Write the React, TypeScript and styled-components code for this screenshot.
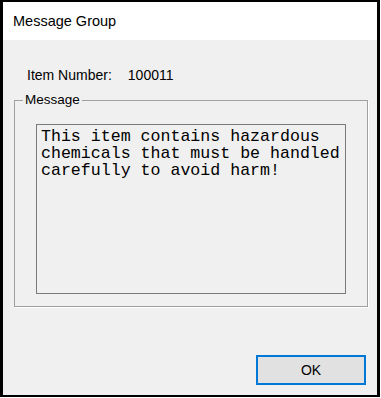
import styled, { createGlobalStyle } from 'styled-components';

const GlobalStyle = createGlobalStyle`
  html, body {
    margin: 0;
    padding: 0;
    background: #ffffff;
  }
  body {
    font-family: "Liberation Sans", Arial, sans-serif;
  }
`

const Window = styled.div`
  box-sizing: border-box;
  width: 380px;
  height: 397px;
  border-style: solid;
  border-color: #000000;
  border-width: 2px 3px 2px 3px;
  display: flex;
  flex-direction: column;
  background: #f0f0f0;
`

const TitleBar = styled.div`
  height: 38px;
  flex: none;
  background: #ffffff;
  display: flex;
  align-items: center;
  padding-left: 10px;
  font-size: 14.5px;
  color: #000000;
`

const Body = styled.div`
  flex: 1;
  display: flex;
  flex-direction: column;
  padding: 0 9px 10px 11px;
`

const ItemRow = styled.div`
  display: flex;
  gap: 16px;
  margin-top: 27px;
  padding-left: 13px;
  font-size: 14px;
  line-height: 16px;
  color: #000000;
`

const GroupBox = styled.fieldset`
  margin: 9px 0 0 0;
  padding: 16px 21px 12px 21px;
  border: 1px solid #a0a0a0;
  box-shadow: 1px 1px 0 #ffffff;
  min-width: 0;
`

const Legend = styled.legend`
  margin-left: -13px;
  padding: 0 2px;
  font-size: 13.5px;
  line-height: 16px;
  color: #000000;
`

const MessageBox = styled.div`
  box-sizing: border-box;
  height: 170px;
  border: 1px solid #7a7a7a;
  padding: 3px 1px 3px 4px;
  font-family: "Courier New", "Liberation Mono", monospace;
  font-size: 16.6px;
  line-height: 17px;
  color: #000000;
  background: #f0f0f0;
`

const Footer = styled.div`
  margin-top: auto;
  display: flex;
  justify-content: flex-end;
  padding-right: 2px;
`

const Button = styled.button`
  box-sizing: border-box;
  width: 110px;
  height: 30px;
  border: 2px solid #0078d7;
  background: #e1e1e1;
  font-family: "Liberation Sans", Arial, sans-serif;
  font-size: 14px;
  color: #000000;
  padding: 0;
`

export default function App() {
  return (
    <>
      <GlobalStyle />
      <Window>
        <TitleBar>Message Group</TitleBar>
        <Body>
          <ItemRow>
            <span>Item Number:</span>
            <span>100011</span>
          </ItemRow>
          <GroupBox>
            <Legend>Message</Legend>
            <MessageBox>
              This item contains hazardous chemicals that must be handled carefully to avoid harm!
            </MessageBox>
          </GroupBox>
          <Footer>
            <Button>OK</Button>
          </Footer>
        </Body>
      </Window>
    </>
  )
}
